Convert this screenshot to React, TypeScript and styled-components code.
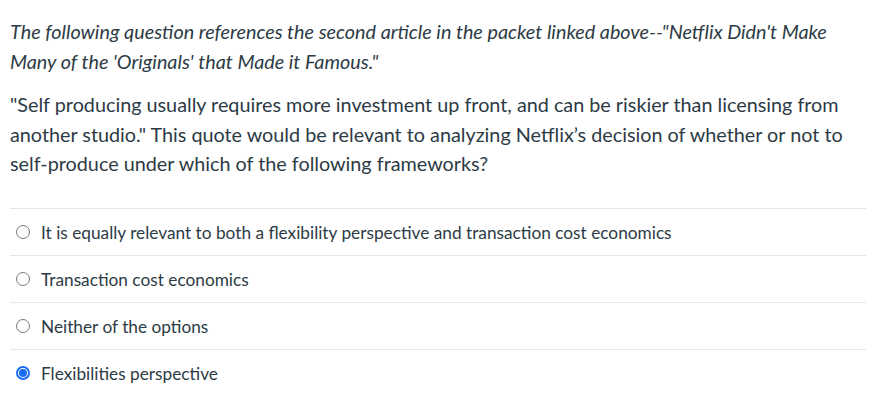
import React from "react";
import styled, { createGlobalStyle } from "styled-components";

const Global = createGlobalStyle`
  html, body { margin: 0; padding: 0; background: #ffffff; }
  body { font-family: Lato, "Noto Sans", sans-serif; color: #2d3b45; }
`;

const Page = styled.div`
  width: 856px;
  padding: 17px 0 0 10px;
`;

const Para = styled.p<{ $italic?: boolean }>`
  margin: 0 0 14px 0;
  font-size: 19.8px;
  line-height: 29.6px;
  font-style: ${(p) => (p.$italic ? "italic" : "normal")};
`;

const Options = styled.div`
  margin-top: 29.5px;
  border-top: 1px solid #e6e6e6;
`;

const Row = styled.label<{ $last?: boolean }>`
  display: flex;
  align-items: center;
  height: 46px;
  border-bottom: ${(p) => (p.$last ? "none" : "1px solid #e6e6e6")};
  font-size: 17.25px;
  cursor: pointer;
`;

const Radio = styled.span<{ $checked?: boolean }>`
  box-sizing: border-box;
  width: 14px;
  height: 14px;
  margin: 0 11px 0 6px;
  border-radius: 50%;
  border: ${(p) => (p.$checked ? "2px solid #1a6cf2" : "1.2px solid #7a7a7a")};
  display: flex;
  align-items: center;
  justify-content: center;
  flex-shrink: 0;
  &::after {
    content: "";
    display: ${(p) => (p.$checked ? "block" : "none")};
    width: 8px;
    height: 8px;
    border-radius: 50%;
    background: #1a6cf2;
  }
`;

const options = [
  "It is equally relevant to both a flexibility perspective and transaction cost economics",
  "Transaction cost economics",
  "Neither of the options",
  "Flexibilities perspective",
];

export default function App() {
  return (
    <Page>
      <Global />
      <Para $italic>
        The following question references the second article in the packet linked above--"Netflix Didn't Make Many of the 'Originals' that Made it Famous."
      </Para>
      <Para>
        "Self producing usually requires more investment up front, and can be riskier than licensing from another studio." This quote would be relevant to analyzing Netflix’s decision of whether or not to self-produce under which of the following frameworks?
      </Para>
      <Options>
        {options.map((o, i) => (
          <Row key={o} $last={i === options.length - 1}>
            <Radio $checked={i === 3} />
            {o}
          </Row>
        ))}
      </Options>
    </Page>
  );
}
